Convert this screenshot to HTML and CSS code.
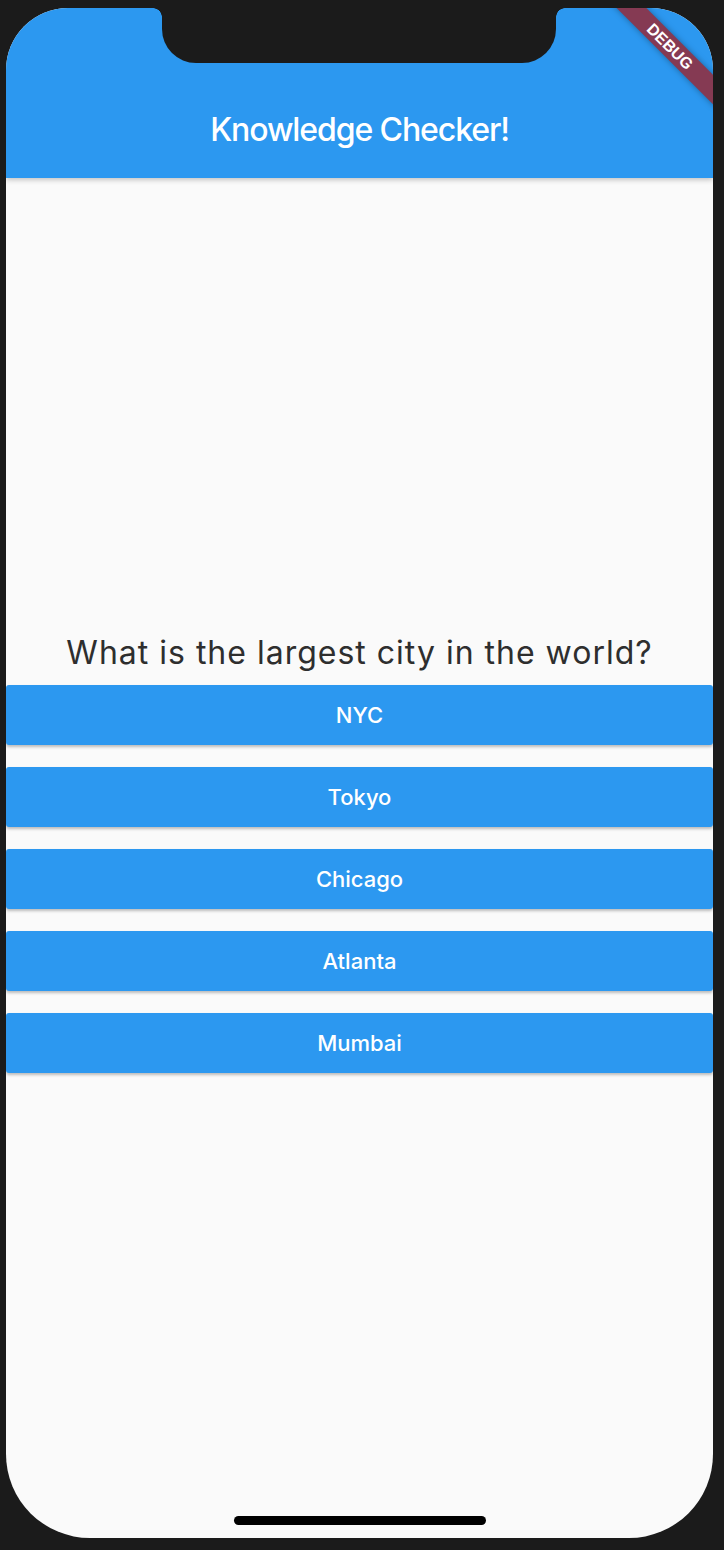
FILE: index.html
```html
<!DOCTYPE html>
<html lang="en">
<head>
<meta charset="utf-8">
<title>Knowledge Checker!</title>
<link rel="stylesheet" href="styles.css">
</head>
<body>
<div class="device">
  <div class="screen">
    <header class="appbar">
      <h1 class="title">Knowledge Checker!</h1>
    </header>
    <main class="content">
      <p class="question">What is the largest city in the world?</p>
      <button class="answer">NYC</button>
      <button class="answer">Tokyo</button>
      <button class="answer">Chicago</button>
      <button class="answer">Atlanta</button>
      <button class="answer">Mumbai</button>
    </main>
    <div class="notch"></div>
    <div class="debug-banner">DEBUG</div>
    <div class="home-indicator"></div>
  </div>
</div>
</body>
</html>
```

FILE: styles.css
```css
html, body {
  margin: 0;
  padding: 0;
  background: #1b1b1b;
}

.device {
  width: 724px;
  height: 1550px;
  box-sizing: border-box;
  padding: 8px 11px 12px 6px;
  background: #1b1b1b;
}

.screen {
  position: relative;
  height: 100%;
  background: #fafafa;
  border-radius: 62px 62px 84px 84px;
  overflow: hidden;
  display: flex;
  flex-direction: column;
  font-family: Inter, "Noto Sans", sans-serif;
}

.appbar {
  flex: 0 0 170px;
  box-sizing: border-box;
  height: 170px;
  padding-top: 74px;
  background: #2c98f0;
  box-shadow: 0 2px 5px rgba(0, 0, 0, 0.22);
  position: relative;
  z-index: 1;
}

.title {
  margin: 0;
  height: 96px;
  line-height: 96px;
  text-align: center;
  color: #ffffff;
  font-size: 32px;
  font-weight: 500;
  letter-spacing: -1.1px;
}

.content {
  flex: 1;
  display: flex;
  flex-direction: column;
  justify-content: center;
}

.question {
  margin: 0;
  height: 42px;
  line-height: 42px;
  text-align: center;
  font-size: 32px;
  font-weight: 400;
  color: #2e2e2e;
  letter-spacing: 1px;
}

.answer {
  display: block;
  width: 100%;
  height: 60px;
  margin: 11px 0;
  padding: 0;
  border: none;
  border-radius: 3px;
  background: #2c98f0;
  color: #ffffff;
  font-family: Inter, "Noto Sans", sans-serif;
  font-size: 22px;
  font-weight: 500;
  box-shadow: 0 2px 3px rgba(0, 0, 0, 0.25);
}

.notch {
  position: absolute;
  top: 0;
  left: 156px;
  width: 394px;
  height: 55px;
  background: #1b1b1b;
  border-radius: 0 0 34px 34px;
  z-index: 3;
}

.notch::before,
.notch::after {
  content: "";
  position: absolute;
  top: 0;
  width: 9px;
  height: 9px;
}

.notch::before {
  left: -9px;
  background: radial-gradient(circle at 0 100%, transparent 8.5px, #1b1b1b 9px);
}

.notch::after {
  right: -9px;
  background: radial-gradient(circle at 100% 100%, transparent 8.5px, #1b1b1b 9px);
}

.debug-banner {
  position: absolute;
  top: 28px;
  left: 589px;
  width: 150px;
  height: 21px;
  line-height: 21px;
  transform: rotate(45deg);
  background: #853a53;
  color: #ffffff;
  font-family: "Liberation Sans", Arial, sans-serif;
  font-weight: 700;
  font-size: 16px;
  text-align: center;
  box-shadow: 0 0 6px rgba(0, 0, 0, 0.35);
  z-index: 4;
}

.home-indicator {
  position: absolute;
  left: 228px;
  bottom: 13px;
  width: 252px;
  height: 9px;
  border-radius: 5px;
  background: #000000;
  z-index: 2;
}
```
